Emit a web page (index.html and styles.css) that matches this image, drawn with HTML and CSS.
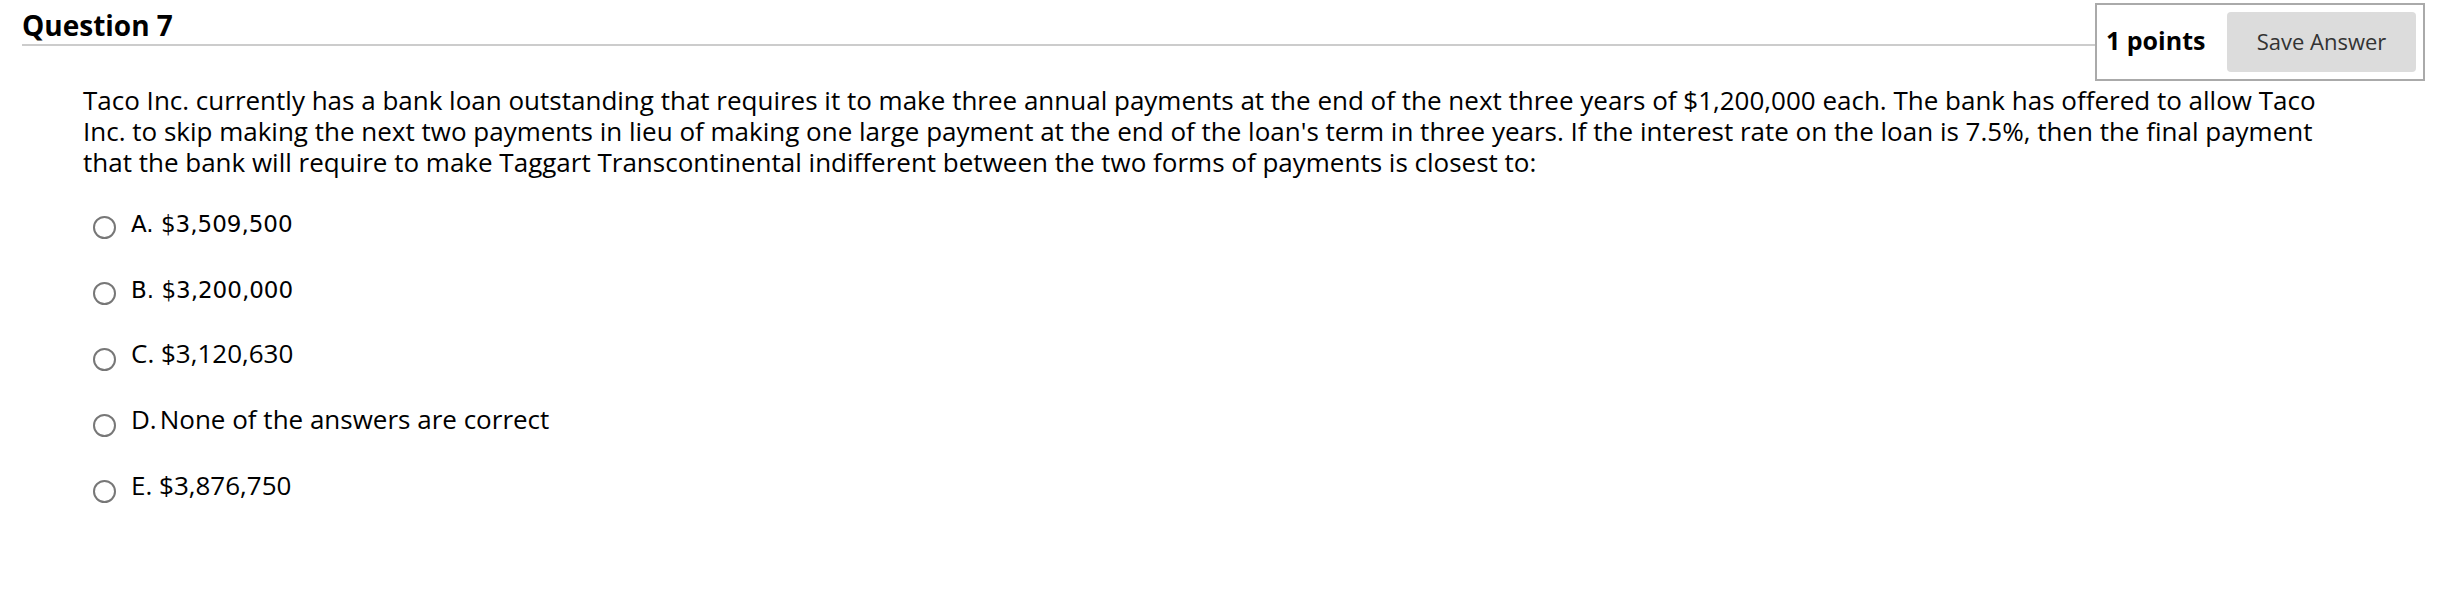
FILE: index.html
```
<!DOCTYPE html>
<html lang="en">
<head>
<meta charset="utf-8">
<title>Question 7</title>
<link rel="stylesheet" href="styles.css">
</head>
<body>
<div class="page">
  <div class="qhead">
    <h2 class="qtitle">Question 7</h2>
    <div class="pointsbox">
      <span class="points">1 points</span>
      <button class="save" type="button">Save Answer</button>
    </div>
  </div>
  <p class="qtext">Taco Inc. currently has a bank loan outstanding that requires it to make three annual payments at the end of the next three years of $1,200,000 each. The bank has offered to allow Taco Inc. to skip making the next two payments in lieu of making one large payment at the end of the loan's term in three years. If the interest rate on the loan is 7.5%, then the final payment that the bank will require to make Taggart Transcontinental indifferent between the two forms of payments is closest to:</p>
  <ul class="options">
    <li class="opt"><span class="radio"></span><span class="otext alt">A. $3,509,500</span></li>
    <li class="opt"><span class="radio"></span><span class="otext alt">B. $3,200,000</span></li>
    <li class="opt"><span class="radio"></span><span class="otext">C. $3,120,630</span></li>
    <li class="opt"><span class="radio"></span><span class="otext">D.<span class="tight">None of the answers are correct</span></span></li>
    <li class="opt"><span class="radio"></span><span class="otext">E. $3,876,750</span></li>
  </ul>
</div>
</body>
</html>
```
FILE: styles.css
```
html, body {
  margin: 0;
  padding: 0;
  background: #ffffff;
}
body {
  font-family: "Open Sans", "Liberation Sans", sans-serif;
  color: #000000;
  width: 2440px;
  height: 598px;
  overflow: hidden;
}
.page {
  padding: 3px 15px 0 22px;
}
.qhead {
  display: flex;
  align-items: flex-start;
}
.qtitle {
  flex: 1;
  margin: 0;
  padding-top: 3px;
  font-size: 28px;
  line-height: 38px;
  font-weight: 700;
  border-bottom: 2px solid #cccccc;
}
.pointsbox {
  display: flex;
  align-items: center;
  gap: 20px;
  border: 2px solid #aaaaaa;
  padding: 7px 7px 7px 9px;
}
.points {
  font-size: 25px;
  line-height: 30px;
  font-weight: 700;
  width: 101px;
  white-space: nowrap;
  margin-top: -4px;
}
.save {
  width: 189px;
  height: 60px;
  border: none;
  border-radius: 4px;
  background: #dcdcdc;
  color: #333333;
  font-family: "Open Sans", "Liberation Sans", sans-serif;
  font-size: 22px;
  line-height: 30px;
  padding: 0 0 2px 0;
}
.qtext {
  margin: 4px 0 0 61px;
  width: 2262px;
  font-size: 26px;
  line-height: 31px;
}
.options {
  list-style: none;
  margin: 10px 0 0 71px;
  padding: 0;
}
.opt {
  display: flex;
  align-items: flex-start;
  gap: 15px;
  height: 30px;
  padding: 18px 0;
  font-size: 26px;
  line-height: 30px;
}
.radio {
  flex: none;
  box-sizing: border-box;
  width: 23px;
  height: 23px;
  margin-top: 10px;
  border: 2px solid #777777;
  border-radius: 50%;
  background: #ffffff;
}
.otext.alt {
  font-family: "DejaVu Sans", "Open Sans", sans-serif;
  font-size: 23px;
  margin-top: 3px;
}
.tight {
  margin-left: 3px;
}
```
